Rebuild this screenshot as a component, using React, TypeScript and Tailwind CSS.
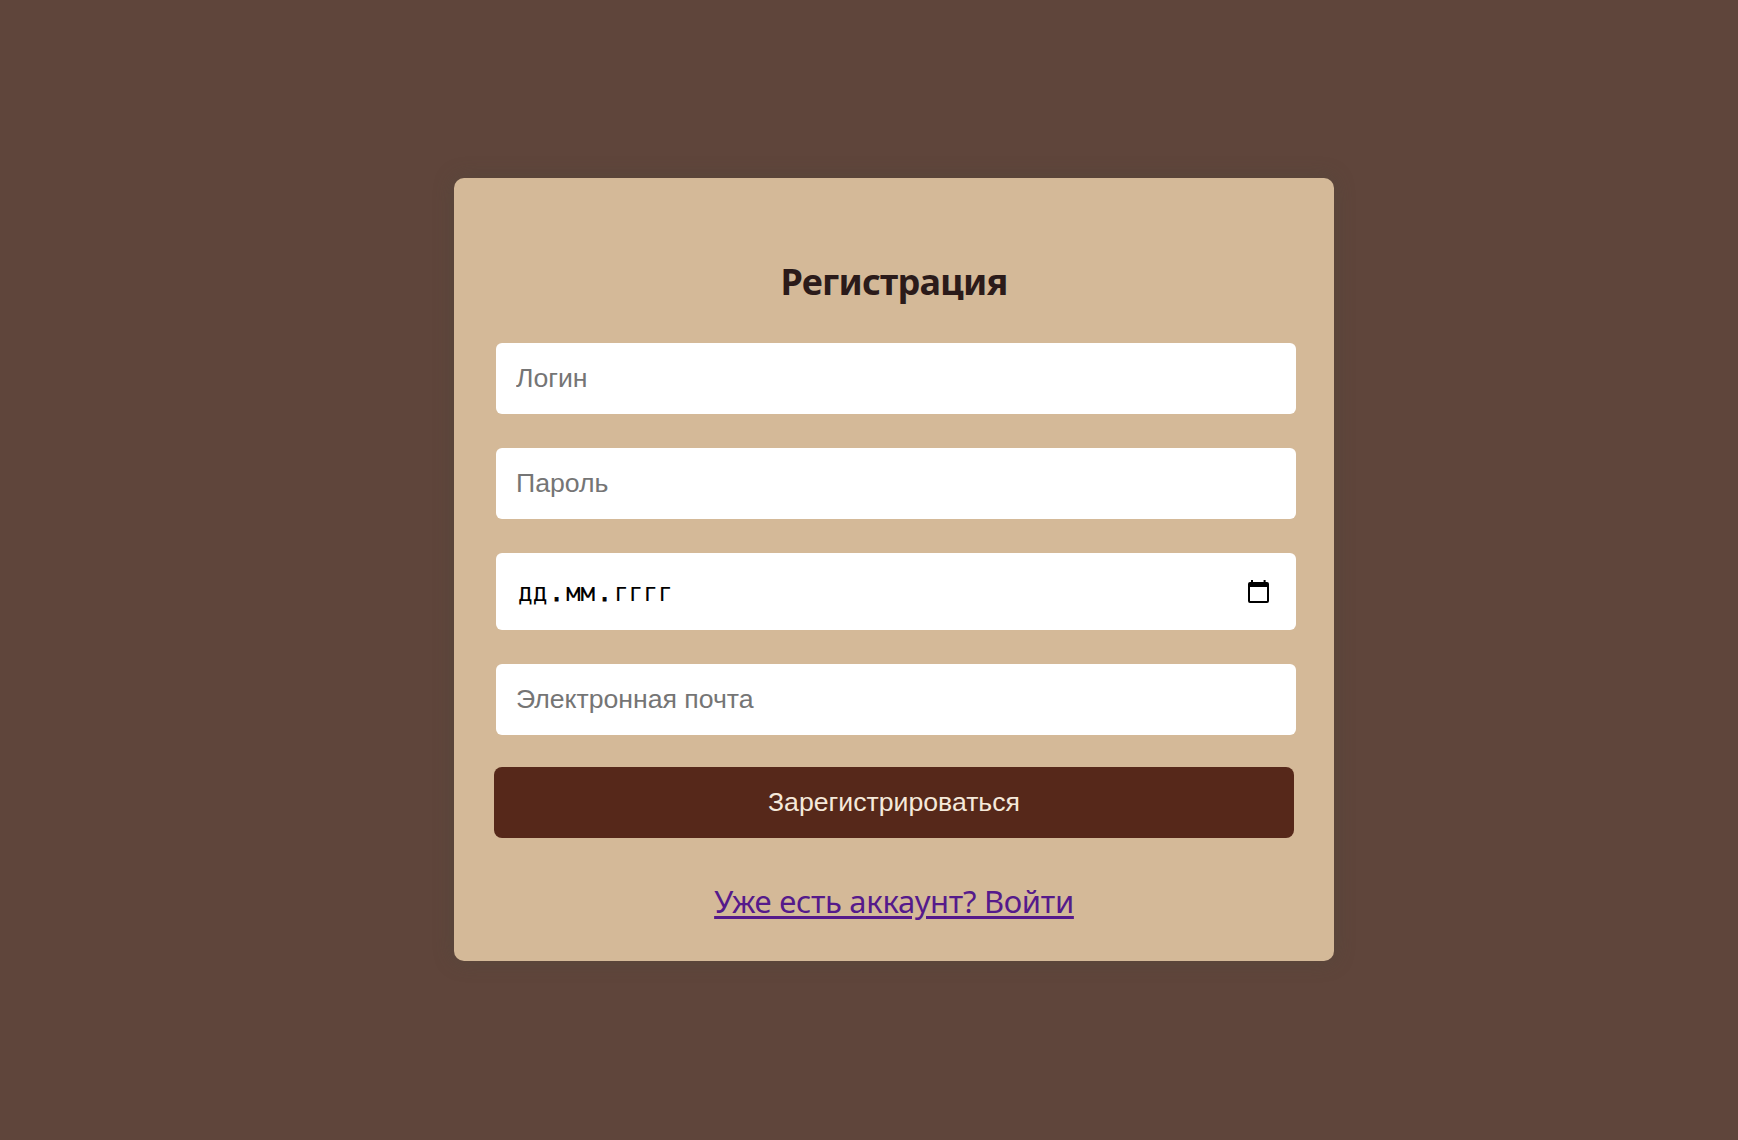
const field =
  "block w-[800px] rounded-[6px] bg-white px-5 pb-px font-['Liberation_Sans',Arial,sans-serif] text-[26.67px] leading-[30px] tracking-[-0.02px] text-black placeholder:text-[#757575] outline-none";

function CalendarIcon() {
  return (
    <svg width="21" height="23" viewBox="0 0 21 23" aria-hidden="true">
      <path d="M3 0h2v3H3zM15.6 0h2v3h-2z" fill="#000" />
      <path
        fillRule="evenodd"
        d="M2 2h17a2 2 0 0 1 2 2v17a2 2 0 0 1-2 2H2a2 2 0 0 1-2-2V4a2 2 0 0 1 2-2zM2 7v14h17V7z"
        fill="#000"
      />
    </svg>
  );
}

function DateField() {
  return (
    <div className="flex h-[77px] w-[800px] items-center justify-between rounded-[6px] bg-white pr-[27px] pl-5">
      <div className="flex pt-[2px] font-['DejaVu_Sans_Mono',monospace] text-[24.35px] leading-[30px] text-black">
        <span className="px-[2px]">дд</span>
        <span className="[-webkit-text-stroke:0.8px_black]">.</span>
        <span className="px-[2px]">мм</span>
        <span className="[-webkit-text-stroke:0.8px_black]">.</span>
        <span className="px-[2px]">гггг</span>
      </div>
      <CalendarIcon />
    </div>
  );
}

export default function App() {
  return (
    <main className="flex h-[1140px] w-full items-start justify-center bg-[#5f453b] pt-[178px] pl-[50px]">
      <form className="flex h-[783px] w-[880px] flex-col rounded-[10px] bg-[#d4b998] px-10 shadow-[0_0_20px_rgba(74,74,60,0.4)]">
        <h1 className="mt-[80px] text-center font-['Noto_Sans',sans-serif] text-[36px] leading-[48px] font-bold text-[#2b1b1a]">
          <span className="tracking-[-0.75px]">Регистрация</span>
        </h1>
        <div className="mt-[37px] ml-[2px] flex flex-col gap-[34px]">
          <input className={`${field} h-[71px]`} type="text" placeholder="Логин" />
          <input className={`${field} h-[71px]`} type="password" placeholder="Пароль" />
          <DateField />
          <input className={`${field} h-[71px]`} type="email" placeholder="Электронная почта" />
        </div>
        <button
          type="button"
          className="mt-8 h-[71px] w-[800px] rounded-[8px] bg-[#56281a] pb-[2px] font-['Liberation_Sans',Arial,sans-serif] text-[26.67px] leading-[30px] text-[#f5e9da]"
        >
          Зарегистрироваться
        </button>
        <p className="mt-[42px] text-center font-['Noto_Sans',sans-serif] text-[31px] leading-[43px] text-[#551a8b]">
          <a href="#" className="tracking-[-0.3px] underline decoration-[3px] underline-offset-[3px]">
            Уже есть аккаунт? Войти
          </a>
        </p>
      </form>
    </main>
  );
}
